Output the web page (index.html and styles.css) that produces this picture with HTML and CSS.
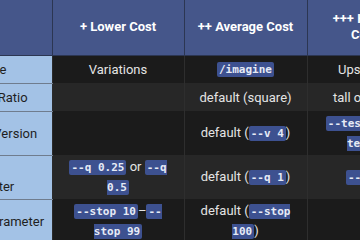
FILE: index.html
```html
<!DOCTYPE html>
<html>
<head>
<meta charset="utf-8">
<link rel="stylesheet" href="styles.css">
</head>
<body>
<div class="viewport">
  <table class="cmp">
    <colgroup>
      <col class="c-label">
      <col class="c-low">
      <col class="c-avg">
      <col class="c-high">
    </colgroup>
    <thead>
      <tr class="head">
        <th></th>
        <th>+ Lower Cost</th>
        <th>++ Average Cost</th>
        <th class="narrow">+++ Higher Cost</th>
      </tr>
    </thead>
    <tbody>
      <tr class="single">
        <td class="label">Job Type</td>
        <td>Variations</td>
        <td><code>/imagine</code></td>
        <td>Upscales</td>
      </tr>
      <tr class="single">
        <td class="label">Aspect Ratio</td>
        <td></td>
        <td>default (square)</td>
        <td>tall or wide</td>
      </tr>
      <tr class="double">
        <td class="label">Model Version</td>
        <td></td>
        <td>default (<code>--v 4</code>)</td>
        <td><code>--test</code> or <code>--testp</code></td>
      </tr>
      <tr class="double">
        <td class="label">Quality<br>Parameter</td>
        <td><code>--q 0.25</code> or <code>--q 0.5</code></td>
        <td>default (<code>--q 1</code>)</td>
        <td><code>--q 2</code></td>
      </tr>
      <tr class="double">
        <td class="label">Stop Parameter</td>
        <td><code>--stop 10</code>–<code>--stop 99</code></td>
        <td>default (<code>--stop 100</code>)</td>
        <td></td>
      </tr>
    </tbody>
  </table>
</div>
</body>
</html>
```

FILE: styles.css
```css
html, body {
  margin: 0;
  padding: 0;
  background: #1b1b1b;
}

.viewport {
  width: 360px;
  height: 240px;
  overflow: hidden;
  background: #1b1b1b;
}

.cmp {
  border-collapse: collapse;
  table-layout: fixed;
  width: 476px;
  margin-left: -54px;
  font-family: Roboto, "Liberation Sans", sans-serif;
  font-size: 13px;
  color: #e4e4e4;
}

.c-label { width: 106px; }
.c-low { width: 132px; }
.c-avg { width: 123px; }
.c-high { width: 115px; }

.head { height: 55px; }

.head th {
  background: #45568a;
  color: #ffffff;
  font-weight: 700;
  font-size: 13px;
  line-height: 16px;
  padding: 0 10px;
  text-align: center;
  vertical-align: middle;
  border-right: 1px solid #2c3652;
  border-bottom: 1px solid #2c3652;
}

.head th.narrow {
  padding: 0 18px;
}

.single { height: 28px; }
.double { height: 42px; }

.cmp td {
  padding: 2px 10px;
  line-height: 19px;
  text-align: center;
  vertical-align: middle;
  border-right: 1px solid #2e2e2e;
}

tbody tr:nth-child(odd) td { background: #1b1b1b; }
tbody tr:nth-child(even) td { background: #272727; }

.cmp td.label {
  background: #a3c2e6;
  color: #1f1f1f;
  font-size: 13px;
  text-align: left;
  padding: 2px 2px 2px 8px;
  line-height: 19px;
  border-bottom: 1px solid #6f7c8e;
  border-right: 1px solid #2b2b2b;
}

code {
  font-family: "DejaVu Sans Mono", monospace;
  font-weight: 700;
  font-size: 11px;
  background: #3d5190;
  color: #e6ebf6;
  padding: 1px 2px;
  border-radius: 2px;
}
```
